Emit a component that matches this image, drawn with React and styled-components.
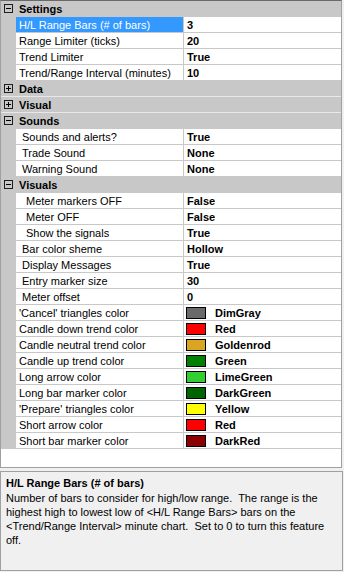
import React from 'react';
import styled, { createGlobalStyle } from 'styled-components';

const GlobalStyle = createGlobalStyle`
  html, body {
    margin: 0;
    padding: 0;
    background: #f0f0f0;
  }
  body {
    font-family: "Liberation Sans", Arial, sans-serif;
    font-size: 11px;
    color: #000;
  }
  * {
    box-sizing: border-box;
  }
`;

const Page = styled.div`
  width: 344px;
  height: 572px;
  display: flex;
  flex-direction: column;
`;

const Grid = styled.div`
  width: 342px;
  height: 468px;
  background: #fff;
  border: 1px solid #a0a0a0;
  border-top-color: #696969;
  overflow: hidden;
`;

const CategoryRow = styled.div`
  height: 16px;
  display: flex;
  align-items: center;
  background: #c8c8c8;
  border-bottom: 1px solid ${(p) => (p.$lightLine ? '#e8e8e8' : '#c8c8c8')};
  font-weight: bold;
`;

const ExpandBox = styled.div`
  position: relative;
  width: 9px;
  height: 9px;
  margin: 0 6px 0 3px;
  border: 1px solid #1e1e1e;
  background: #c8c8c8;

  &::before {
    content: '';
    position: absolute;
    left: 1px;
    top: 3px;
    width: 5px;
    height: 1px;
    background: #000;
  }

  &::after {
    content: '';
    display: ${(p) => (p.$open ? 'none' : 'block')};
    position: absolute;
    left: 3px;
    top: 1px;
    width: 1px;
    height: 5px;
    background: #000;
  }
`;

const PropRow = styled.div`
  height: 16px;
  display: flex;
`;

const Margin = styled.div`
  width: 15px;
  flex: none;
  background: #c8c8c8;
`;

const Label = styled.div`
  width: 167px;
  flex: none;
  display: flex;
  align-items: center;
  padding-left: ${(p) => p.$indent - 16}px;
  white-space: pre;
  overflow: hidden;
  background: ${(p) => (p.$selected ? '#3399ff' : '#fff')};
  color: ${(p) => (p.$selected ? '#fff' : '#000')};
  border-bottom: 1px solid #c8c8c8;
`;

const Value = styled.div`
  flex: 1;
  display: flex;
  align-items: center;
  padding-left: 3px;
  border-left: 1px solid #c8c8c8;
  border-bottom: 1px solid #c8c8c8;
  font-weight: bold;
  white-space: pre;
  overflow: hidden;
`;

const Swatch = styled.span`
  width: 20px;
  height: 12px;
  margin: 0 9px 0 -1px;
  border: 1px solid #000;
  background: ${(p) => p.$color};
  flex: none;
`;

const Help = styled.div`
  width: 343px;
  height: 100px;
  margin-top: 3px;
  padding: 5px 5px;
  border: 1px solid #a0a0a0;
  background: #f0f0f0;
`;

const HelpTitle = styled.div`
  font-weight: bold;
  line-height: 13px;
  margin-bottom: 1px;
`;

const HelpLine = styled.div`
  white-space: pre;
  line-height: 14px;
`;

const sections = [
  {
    name: 'Settings',
    open: true,
    items: [
      { label: 'H/L Range Bars (# of bars)', value: '3', indent: 19, selected: true },
      { label: 'Range Limiter (ticks)', value: '20', indent: 19 },
      { label: 'Trend Limiter', value: 'True', indent: 19 },
      { label: 'Trend/Range Interval (minutes)', value: '10', indent: 19 },
    ],
  },
  { name: 'Data', open: false, items: [] },
  { name: 'Visual', open: false, items: [] },
  {
    name: 'Sounds',
    open: true,
    items: [
      { label: 'Sounds and alerts?', value: 'True', indent: 22 },
      { label: 'Trade Sound', value: 'None', indent: 22 },
      { label: 'Warning Sound', value: 'None', indent: 22 },
    ],
  },
  {
    name: 'Visuals',
    open: true,
    items: [
      { label: 'Meter markers OFF', value: 'False', indent: 26 },
      { label: 'Meter OFF', value: 'False', indent: 26 },
      { label: 'Show the signals', value: 'True', indent: 26 },
      { label: 'Bar color sheme', value: 'Hollow', indent: 22 },
      { label: 'Display Messages', value: 'True', indent: 22 },
      { label: 'Entry marker size', value: '30', indent: 22 },
      { label: 'Meter offset', value: '0', indent: 22 },
      { label: "'Cancel' triangles color", value: 'DimGray', color: '#696969', indent: 19 },
      { label: 'Candle down trend color', value: 'Red', color: '#ff0000', indent: 19 },
      { label: 'Candle neutral trend color', value: 'Goldenrod', color: '#daa520', indent: 19 },
      { label: 'Candle up trend color', value: 'Green', color: '#008000', indent: 19 },
      { label: 'Long arrow color', value: 'LimeGreen', color: '#32cd32', indent: 19 },
      { label: 'Long bar marker color', value: 'DarkGreen', color: '#006400', indent: 19 },
      { label: "'Prepare' triangles color", value: 'Yellow', color: '#ffff00', indent: 19 },
      { label: 'Short arrow color', value: 'Red', color: '#ff0000', indent: 19 },
      { label: 'Short bar marker color', value: 'DarkRed', color: '#8b0000', indent: 19 },
    ],
  },
];

const helpLines = [
  'Number of bars to consider for high/low range.  The range is the',
  'highest high to lowest low of <H/L Range Bars> bars on the',
  '<Trend/Range Interval> minute chart.  Set to 0 to turn this feature',
  'off.',
];

const App = () => {
  return (
    <Page>
      <GlobalStyle />
      <Grid>
        {sections.map((section, i) => {
          const next = sections[i + 1];
          const lightLine = section.items.length === 0 || !section.open ? !!next : false;
          return (
            <React.Fragment key={section.name}>
              <CategoryRow $lightLine={lightLine}>
                <ExpandBox $open={section.open} />
                {section.name}
              </CategoryRow>
              {section.items.map((item) => (
                <PropRow key={item.label}>
                  <Margin />
                  <Label $indent={item.indent} $selected={item.selected}>
                    {item.label}
                  </Label>
                  <Value>
                    {item.color && <Swatch $color={item.color} />}
                    {item.value}
                  </Value>
                </PropRow>
              ))}
            </React.Fragment>
          );
        })}
      </Grid>
      <Help>
        <HelpTitle>H/L Range Bars (# of bars)</HelpTitle>
        {helpLines.map((line) => (
          <HelpLine key={line}>{line}</HelpLine>
        ))}
      </Help>
    </Page>
  );
};

export default App;
